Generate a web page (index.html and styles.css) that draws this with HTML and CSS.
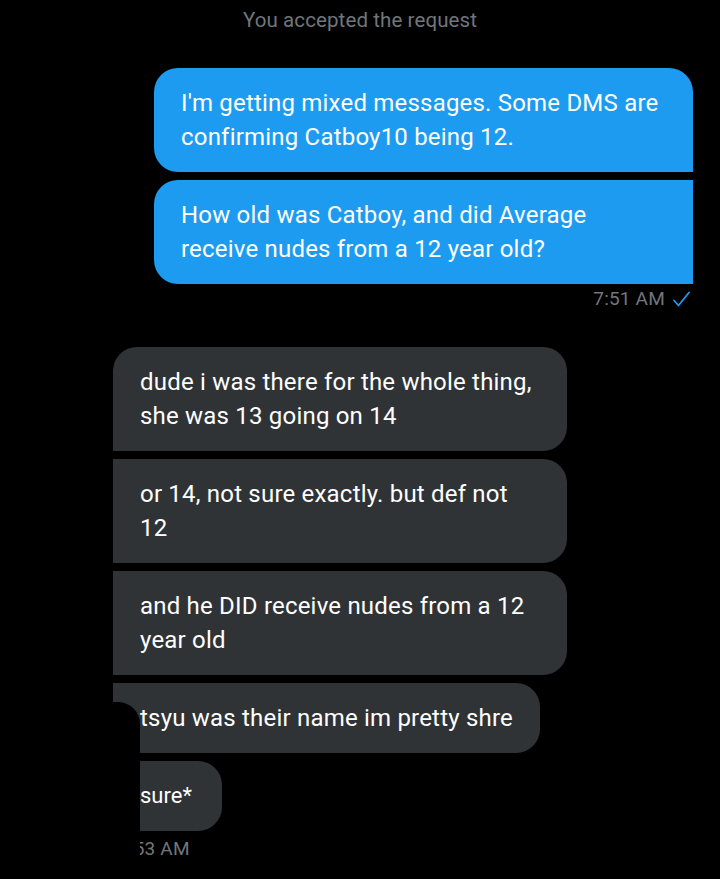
FILE: index.html
```html
<!DOCTYPE html>
<html>
<head>
<meta charset="utf-8">
<link rel="stylesheet" href="styles.css">
</head>
<body>
<div class="chat">
  <div class="notice">You accepted the request</div>

  <div class="group sent">
    <div class="bubble blue first full">I'm getting mixed messages. Some DMS are<br>confirming Catboy10 being 12.</div>
    <div class="bubble blue last full">How old was Catboy, and did Average<br>receive nudes from a 12 year old?</div>
    <div class="meta sent-meta">
      <span>7:51 AM</span>
      <svg class="check" viewBox="0 0 20 20" width="20" height="20"><path d="M3 11.5 L7.5 16.5 L18 3.5" fill="none" stroke="#1d9bf0" stroke-width="1.8" stroke-linecap="round" stroke-linejoin="round"/></svg>
    </div>
  </div>

  <div class="group received">
    <div class="bubble gray first full">dude i was there for the whole thing,<br>she was 13 going on 14</div>
    <div class="bubble gray full">or 14, not sure exactly. but def not<br>12</div>
    <div class="bubble gray full">and he DID receive nudes from a 12<br>year old</div>
    <div class="bubble gray">tsyu was their name im pretty shre</div>
    <div class="bubble gray short">sure*</div>
    <div class="meta recv-meta">7:53 AM</div>
    <div class="avatar-mask"></div>
  </div>
</div>
</body>
</html>
```

FILE: styles.css
```css
* { box-sizing: border-box; }
html, body {
  margin: 0;
  padding: 0;
  background: #000;
}
body {
  width: 720px;
  height: 879px;
  overflow: hidden;
  font-family: Roboto, "Liberation Sans", sans-serif;
  color: #fff;
}
.chat {
  display: flex;
  flex-direction: column;
  padding-top: 8px;
}
.notice {
  text-align: center;
  font-size: 20.5px;
  line-height: 24px;
  color: #71767b;
  letter-spacing: 0.1px;
}
.group {
  display: flex;
  flex-direction: column;
  gap: 8px;
}
.sent {
  align-items: flex-end;
  padding-right: 27px;
  margin-top: 36px;
}
.received {
  position: relative;
  align-items: flex-start;
  padding-left: 113px;
  margin-top: 38px;
}
.bubble {
  font-size: 24px;
  line-height: 34px;
  letter-spacing: 0.2px;
  padding: 18px 27px;
  white-space: nowrap;
}
.blue {
  background: #1d9bf0;
  border-radius: 24px 0 0 24px;
}
.blue.first { border-top-right-radius: 24px; }
.blue.full { width: 539px; }
.gray {
  background: #2f3336;
  border-radius: 0 24px 24px 0;
}
.gray.first { border-top-left-radius: 24px; }
.gray.full { width: 454px; }
.gray.short {
  font-size: 22px;
  letter-spacing: 0;
  padding-right: 30px;
}
.meta {
  font-size: 19px;
  line-height: 20px;
  color: #71767b;
  letter-spacing: 0.2px;
}
.sent-meta {
  display: flex;
  align-items: center;
  gap: 6px;
  margin-top: -3px;
  margin-right: 2px;
}
.check { display: block; }
.recv-meta {
  padding-left: 5px;
}
.avatar-mask {
  position: absolute;
  left: 0;
  width: 140px;
  top: 355px;
  height: 180px;
  background: #000;
  border-top-right-radius: 22px;
}
```
